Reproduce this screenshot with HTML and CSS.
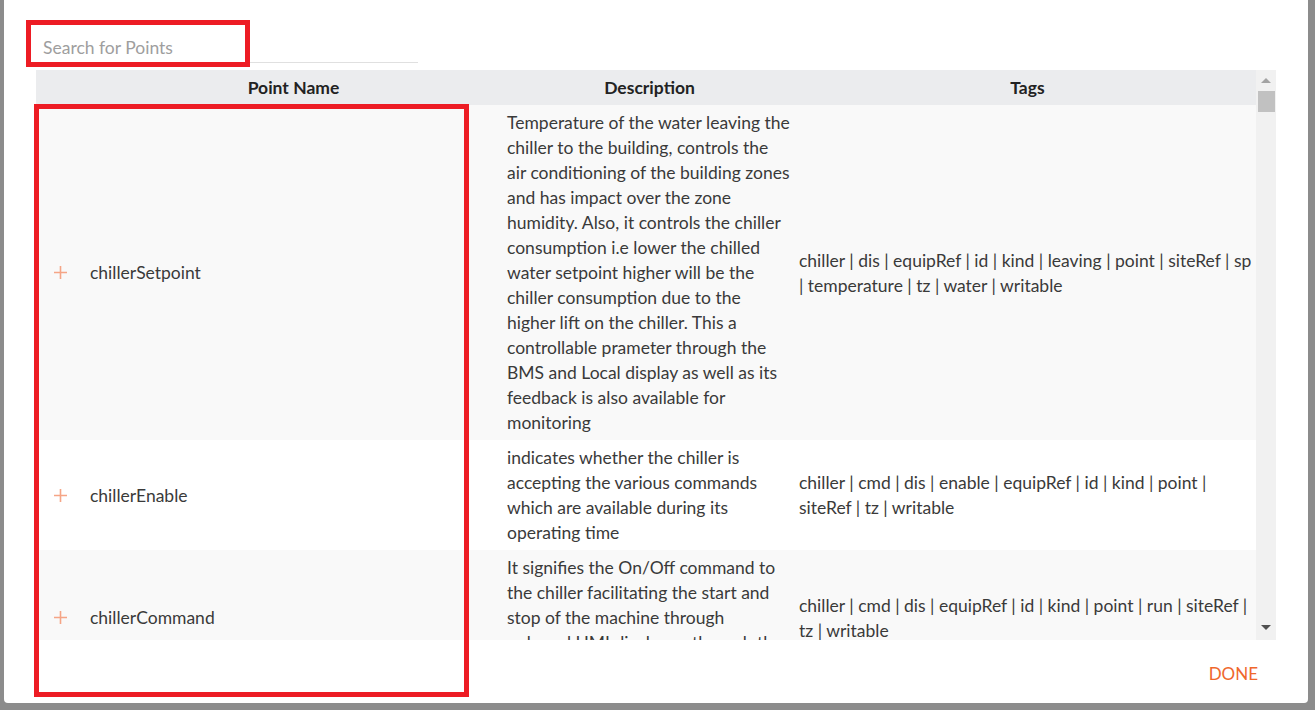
FILE: index.html
```html
<!DOCTYPE html>
<html lang="en">
<head>
  <meta charset="UTF-8" />
  <title>Select Points</title>
  <link rel="stylesheet" href="styles.css">
</head>
<body>

  <div class="backdrop">
    <!-- Point picker dialog -->
    <div class="dialog" role="dialog" aria-label="Select Points">

      <div class="search">
        <input type="text" placeholder="Search for Points" aria-label="Search for Points">
      </div>

      <div class="grid-wrap">
        <div class="grid-scroll">
          <table class="points">
            <colgroup>
              <col class="col-icon">
              <col class="col-name">
              <col class="col-desc">
              <col class="col-tags">
            </colgroup>
            <thead>
              <tr>
                <th></th>
                <th class="th-name">Point Name</th>
                <th class="th-desc">Description</th>
                <th class="th-tags">Tags</th>
              </tr>
            </thead>
            <tbody>
              <tr class="odd">
                <td class="icon"><svg width="13" height="13" viewBox="0 0 13 13"><path d="M6.5 0v13M0 6.5h13"/></svg></td>
                <td class="name">chillerSetpoint</td>
                <td class="desc">Temperature of the water leaving the chiller to the building, controls the air conditioning of the building zones and has impact over the zone humidity. Also, it controls the chiller consumption i.e lower the chilled water setpoint higher will be the chiller consumption due to the higher lift on the chiller. This a controllable prameter through the BMS and Local display as well as its feedback is also available for monitoring</td>
                <td class="tags">chiller | dis | equipRef | id | kind | leaving | point | siteRef | sp | temperature | tz | water | writable</td>
              </tr>
              <tr>
                <td class="icon"><svg width="13" height="13" viewBox="0 0 13 13"><path d="M6.5 0v13M0 6.5h13"/></svg></td>
                <td class="name">chillerEnable</td>
                <td class="desc">indicates whether the chiller is accepting the various commands which are available during its operating time</td>
                <td class="tags">chiller | cmd | dis | enable | equipRef | id | kind | point | siteRef | tz | writable</td>
              </tr>
              <tr class="odd">
                <td class="icon"><svg width="13" height="13" viewBox="0 0 13 13"><path d="M6.5 0v13M0 6.5h13"/></svg></td>
                <td class="name">chillerCommand</td>
                <td class="desc">It signifies the On/Off command to the chiller facilitating the start and stop of the machine through onboard HMI display or through the BMS system by the operator</td>
                <td class="tags">chiller | cmd | dis | equipRef | id | kind | point | run | siteRef | tz | writable</td>
              </tr>
            </tbody>
          </table>
        </div>

        <!-- scrollbar -->
        <div class="scrollbar" aria-hidden="true">
          <span class="arrow up"></span>
          <span class="thumb"></span>
          <span class="track"></span>
          <span class="arrow down"></span>
        </div>
      </div>

      <div class="actions">
        <button type="button">DONE</button>
      </div>

      <!-- Review annotations -->
      <div class="mark mark-search"></div>
      <div class="mark mark-names"></div>
    </div>
  </div>

</body>
</html>
```

FILE: styles.css
```css
body {
  margin: 0;
  font-family: Lato, "Open Sans", sans-serif;
  overflow: hidden;
}

.backdrop {
  background-color: #8c8c8c;
  height: 100vh;
}

/* Dialog */
.dialog {
  position: relative;
  margin-left: 4px;
  width: 1304px;
  height: 703px;
  padding: 0 32px;
  box-sizing: border-box;
  background-color: #fff;
  border-radius: 0 0 4px 4px;
}

.search {
  padding-top: 33px;
  width: 382px;
}

.search input {
  width: 100%;
  height: 30px;
  box-sizing: border-box;
  border: none;
  border-bottom: 1px solid #e0e0e0;
  padding: 0 7px;
  font-family: inherit;
  font-size: 17.5px;
  color: #333;
  outline: none;
}

.search input::placeholder {
  color: #9e9e9e;
}

/* Points table */
.grid-wrap {
  display: flex;
  margin-top: 7px;
  height: 570px;
}

.grid-scroll {
  width: 1220px;
  overflow: hidden;
}

.points {
  width: 1220px;
  table-layout: fixed;
  border-collapse: collapse;
  font-size: 17.5px;
  color: #3a3a3a;
}

.col-icon { width: 54px; }
.col-name { width: 407px; }
.col-desc { width: 295px; }
.col-tags { width: 464px; }

.points th {
  height: 35px;
  padding: 0;
  background-color: #ebecee;
  font-weight: bold;
  color: #222;
  text-align: center;
}

.points th.th-desc {
  padding-left: 10px;
}

.points th.th-tags {
  padding-left: 7px;
}

.points td {
  padding: 5px 0 5px 10px;
  line-height: 25px;
  vertical-align: middle;
}

.points td.tags {
  padding-left: 7px;
}

.points tr.odd td {
  background-color: #f9f9f9;
}

.points td.icon {
  padding: 0 0 0 18px;
}

.points td.icon svg {
  display: block;
  stroke: #f5a586;
  stroke-width: 1.6;
  fill: none;
}

.points td.name {
  padding-left: 0;
}

/* Fake scrollbar */
.scrollbar {
  width: 20px;
  background-color: #f1f1f1;
  display: flex;
  flex-direction: column;
  align-items: center;
}

.arrow {
  width: 0;
  height: 0;
  border-left: 5px solid transparent;
  border-right: 5px solid transparent;
}

.arrow.up {
  margin-top: 8px;
  border-bottom: 5px solid #a3a3a3;
}

.arrow.down {
  margin-bottom: 10px;
  border-top: 5px solid #505050;
}

.thumb {
  margin-top: 8px;
  width: 17px;
  height: 21px;
  background-color: #c1c1c1;
}

.track {
  flex: 1;
}

/* Footer actions */
.actions {
  display: flex;
  justify-content: flex-end;
  margin-top: 15px;
}

.actions button {
  height: 36px;
  padding: 0 18px 0 8px;
  border: none;
  background: none;
  font-family: inherit;
  font-size: 17px;
  color: #ef672c;
  cursor: pointer;
}

/* Red annotation boxes */
.mark {
  position: absolute;
  border: 5px solid #ed1c24;
  box-sizing: border-box;
  pointer-events: none;
}

.mark-search {
  left: 22px;
  top: 20px;
  width: 224px;
  height: 47px;
}

.mark-names {
  left: 30px;
  top: 104px;
  width: 435px;
  height: 593px;
}
```
